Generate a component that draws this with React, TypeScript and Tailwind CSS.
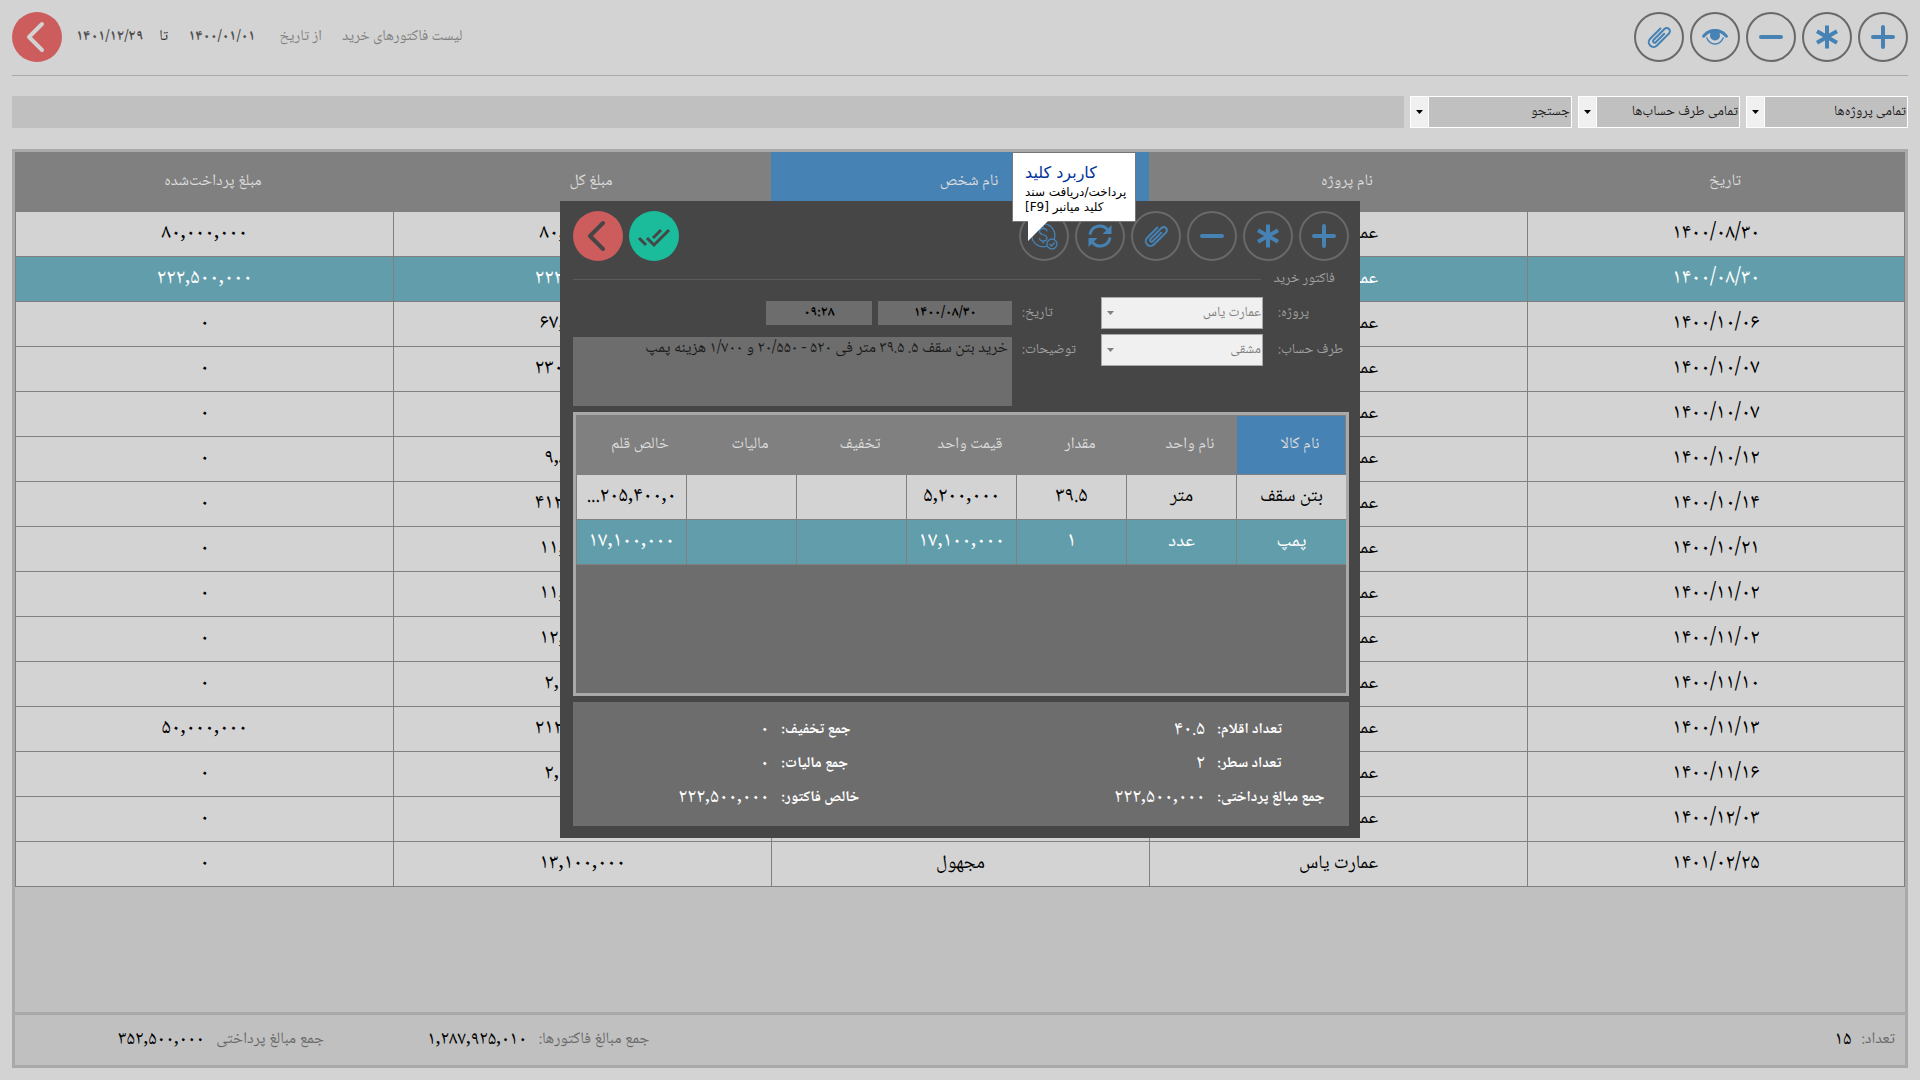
import React from "react";

// --- Types ---
interface Invoice {
  date: string;
  project: string;
  person: string;
  total: string;
  paid: string;
}

// --- Data ---
const invoices: Invoice[] = [
  { date: "۱۴۰۰/۰۸/۳۰", project: "عمارت یاس", person: "مشقی", total: "۸۰,۰۰۰,۰۰۰", paid: "۸۰,۰۰۰,۰۰۰" },
  { date: "۱۴۰۰/۰۸/۳۰", project: "عمارت یاس", person: "مشقی", total: "۲۲۲,۵۰۰,۰۰۰", paid: "۲۲۲,۵۰۰,۰۰۰" },
  { date: "۱۴۰۰/۱۰/۰۶", project: "عمارت یاس", person: "مجهول", total: "۶۷,۵۰۰,۰۰۰", paid: "۰" },
  { date: "۱۴۰۰/۱۰/۰۷", project: "عمارت یاس", person: "مشقی", total: "۲۳۰,۰۰۰,۰۰۰", paid: "۰" },
  { date: "۱۴۰۰/۱۰/۰۷", project: "عمارت یاس", person: "مجهول", total: "۰", paid: "۰" },
  { date: "۱۴۰۰/۱۰/۱۲", project: "عمارت یاس", person: "مجهول", total: "۹,۸۰۰,۰۰۰", paid: "۰" },
  { date: "۱۴۰۰/۱۰/۱۴", project: "عمارت یاس", person: "مشقی", total: "۴۱۲,۰۰۰,۰۰۰", paid: "۰" },
  { date: "۱۴۰۰/۱۰/۲۱", project: "عمارت یاس", person: "مجهول", total: "۱۱,۰۰۰,۰۰۰", paid: "۰" },
  { date: "۱۴۰۰/۱۱/۰۲", project: "عمارت یاس", person: "مجهول", total: "۱۱,۰۰۰,۰۰۰", paid: "۰" },
  { date: "۱۴۰۰/۱۱/۰۲", project: "عمارت یاس", person: "مجهول", total: "۱۲,۰۰۰,۰۰۰", paid: "۰" },
  { date: "۱۴۰۰/۱۱/۱۰", project: "عمارت یاس", person: "مجهول", total: "۲,۰۰۰,۰۰۰", paid: "۰" },
  { date: "۱۴۰۰/۱۱/۱۳", project: "عمارت یاس", person: "مشقی", total: "۲۱۲,۰۰۰,۰۰۰", paid: "۵۰,۰۰۰,۰۰۰" },
  { date: "۱۴۰۰/۱۱/۱۶", project: "عمارت یاس", person: "مجهول", total: "۲,۰۰۰,۰۰۰", paid: "۰" },
  { date: "۱۴۰۰/۱۲/۰۳", project: "عمارت یاس", person: "مجهول", total: "۰", paid: "۰" },
  { date: "۱۴۰۱/۰۲/۲۵", project: "عمارت یاس", person: "مجهول", total: "۱۳,۱۰۰,۰۰۰", paid: "۰" },
];

const columns = ["تاریخ", "نام پروژه", "نام شخص", "مبلغ کل", "مبلغ پرداخت‌شده"];

const itemColumns = ["نام کالا", "نام واحد", "مقدار", "قیمت واحد", "تخفیف", "مالیات", "خالص قلم"];

const items = [
  ["بتن سقف", "متر", "۳۹.۵", "۵,۲۰۰,۰۰۰", "", "", "۲۰۵,۴۰۰,۰..."],
  ["پمپ", "عدد", "۱", "۱۷,۱۰۰,۰۰۰", "", "", "۱۷,۱۰۰,۰۰۰"],
];

const filters = ["تمامی پروژه‌ها", "تمامی طرف حساب‌ها", "جستجو"];

// --- Icons ---
const PlusIcon = () => (
  <svg width="24" height="24" viewBox="0 0 24 24" stroke="currentColor" strokeWidth="4" strokeLinecap="round">
    <path d="M12 2v20M2 12h20" />
  </svg>
);

const MinusIcon = () => (
  <svg width="24" height="24" viewBox="0 0 24 24" stroke="currentColor" strokeWidth="4" strokeLinecap="round">
    <path d="M2 12h20" />
  </svg>
);

const AsteriskIcon = () => (
  <svg width="24" height="24" viewBox="0 0 24 24" stroke="currentColor" strokeWidth="4">
    <path d="M12 0.500v23M2 6.300l20 11.400M22 6.300L2 17.700" />
  </svg>
);

const EyeIcon = () => (
  <svg width="26" height="18" viewBox="0 0 26 18" fill="none">
    <path
      d="M0 8C4 2.500 8.500 1 13 1s9 1.500 13 7c0 2-2 2-3 1-1.500-2-3-3-4.500-3.800h-11C6 6 4.500 7 3 9 2 10 0 10 0 8z"
      fill="currentColor"
    />
    <circle cx="13" cy="7.500" r="5" fill="currentColor" />
    <path d="M4.500 9.500c2 4.500 5 6.500 8.500 6.500s6.500-2 8.500-6.500" stroke="currentColor" strokeWidth="1.400" />
  </svg>
);

const ClipIcon = () => (
  <svg width="26" height="26" viewBox="0 0 26 26" fill="none" stroke="currentColor" strokeWidth="2" strokeLinecap="round">
    <path
      transform="rotate(45 13 13)"
      d="M8 6v14.500a4.800 4.800 0 0 0 9.600 0V3.500a3.200 3.200 0 0 0-6.400 0v15.500a1.600 1.600 0 0 0 3.200 0V7"
    />
  </svg>
);

const RefreshIcon = () => (
  <svg width="26" height="26" viewBox="0 0 26 26" fill="none" stroke="currentColor" strokeWidth="3">
    <path d="M3 11.500A10 10 0 0 1 20.500 6.500M23 14.500A10 10 0 0 1 5.500 19.500" />
    <path d="M24.500 2v9h-9zM1.500 24v-9h9z" fill="currentColor" stroke="none" />
  </svg>
);

const CoinIcon = () => (
  <svg width="28" height="28" viewBox="0 0 28 28" fill="none" stroke="currentColor" strokeWidth="1.300">
    <path d="M24 17.500A11.500 11.500 0 1 0 17.500 24" />
    <path d="M17 9.500c0-1.800-1.500-3-3.800-3S9.500 7.700 9.500 9.500c0 4.200 7.500 2.300 7.500 6.500 0 1.800-1.500 3-3.800 3s-3.700-1.200-3.700-3M13.200 4v2.500M13.200 19v2.500" />
    <circle cx="22" cy="22" r="5" />
    <path d="M19.500 22l2 2 3.300-3.500" />
  </svg>
);

const BackIcon = () => (
  <svg width="50" height="50" viewBox="0 0 50 50" fill="none" stroke="currentColor" strokeWidth="4" strokeLinecap="round" strokeLinejoin="round">
    <path d="M30 12L17 25l13 13" />
  </svg>
);

const DoubleCheckIcon = () => (
  <svg width="50" height="50" viewBox="0 0 50 50" fill="none" stroke="currentColor" strokeWidth="3">
    <path d="M10 27l7 7M18 27l7 7L40 19M24 27l8-8" />
  </svg>
);

// --- Shared pieces ---
interface RoundButtonProps {
  label: string;
  children: React.ReactNode;
}

const RoundButton = ({ label, children }: RoundButtonProps) => (
  <button
    type="button"
    aria-label={label}
    className="flex size-[50px] items-center justify-center rounded-full border-2 border-[#696969] text-[#4682b4]"
  >
    {children}
  </button>
);

const Arrow = () => (
  <svg width="7" height="4" viewBox="0 0 7 4" fill="currentColor">
    <path d="M0 0h7L3.500 4z" />
  </svg>
);

interface FilterSelectProps {
  label: string;
}

const FilterSelect = ({ label }: FilterSelectProps) => (
  <div className="relative h-8 w-[162px] border border-white bg-[#c0c0c0]">
    <select aria-label={label} className="h-full w-full appearance-none truncate bg-transparent pr-px pl-5 text-[14px] leading-[30px] text-[#202020]">
      <option>{label}</option>
    </select>
    <span className="pointer-events-none absolute inset-y-0 left-0 flex w-[18px] items-center justify-center border-r border-white bg-[#f0f0f0] text-black">
      <Arrow />
    </span>
  </div>
);

interface FormSelectProps {
  id: string;
  value: string;
}

const FormSelect = ({ id, value }: FormSelectProps) => (
  <div className="relative h-8 w-[162px] border border-[#a9a9a9] bg-[#f0f0f0]">
    <select id={id} className="h-full w-full appearance-none truncate bg-transparent pr-px pl-5 text-[14px] leading-[30px] text-[#808080]">
      <option>{value}</option>
    </select>
    <span className="pointer-events-none absolute inset-y-0 left-0 flex w-[16px] items-center justify-center text-[#808080]">
      <Arrow />
    </span>
  </div>
);

interface TotalProps {
  label: string;
  value: string;
}

const Total = ({ label, value }: TotalProps) => (
  <div className="flex h-[34px] items-center gap-3 text-white">
    <span className="w-[132px] text-left text-[15px] font-bold">{label}</span>
    <span className="text-[20px]">{value}</span>
  </div>
);

const Tooltip = () => (
  <div
    role="tooltip"
    className="absolute top-[-59px] left-[-7px] z-10 h-[70px] w-[124px] border border-[#767676] bg-white pt-2 pl-3 text-left font-['DejaVu_Sans',sans-serif] whitespace-nowrap"
  >
    <p className="text-[16px] leading-[24px] text-[#003399]">کاربرد کلید</p>
    <p className="text-[12px] leading-[15px] text-black">پرداخت/دریافت سند</p>
    <p className="text-[12px] leading-[15px] text-black">کلید میانبر [F9]</p>
    <svg className="absolute top-[67px] left-[15px]" width="21" height="22" viewBox="0 0 21 22">
      <path d="M0 0h21L0 21z" fill="#ffffff" />
    </svg>
  </div>
);

// --- Invoice dialog ---
const InvoiceDialog = () => (
  <div className="fixed inset-0 flex items-start justify-center pt-[201px]">
    <section role="dialog" aria-label="فاکتور خرید" className="w-[800px] bg-[#464646] pt-[10px] pr-[11px] pb-3 pl-[13px]">
      <div className="flex justify-between">
        <div className="flex gap-[6px]">
          <RoundButton label="افزودن"><PlusIcon /></RoundButton>
          <RoundButton label="ویرایش"><AsteriskIcon /></RoundButton>
          <RoundButton label="حذف"><MinusIcon /></RoundButton>
          <RoundButton label="پیوست"><ClipIcon /></RoundButton>
          <RoundButton label="بازخوانی"><RefreshIcon /></RoundButton>
          <div className="relative">
            <RoundButton label="پرداخت/دریافت سند"><CoinIcon /></RoundButton>
            <Tooltip />
          </div>
        </div>
        <div className="flex gap-[6px]">
          <button type="button" aria-label="تایید" className="size-[50px] rounded-full bg-[#1abc9c] text-[#464646]">
            <DoubleCheckIcon />
          </button>
          <button type="button" aria-label="بازگشت" className="size-[50px] rounded-full bg-[#cd5c5c] text-[#464646]">
            <BackIcon />
          </button>
        </div>
      </div>

      <div className="flex h-9 items-center gap-3 pr-[14px]">
        <h2 className="w-[62px] text-[14px] leading-6 whitespace-nowrap text-[#a0a0a0]">فاکتور خرید</h2>
        <div className="h-px flex-1 bg-[#5a5a5a]" />
      </div>

      <form className="flex flex-col gap-[5px] text-[14px] whitespace-nowrap text-[#a0a0a0]">
        <div className="flex items-center">
          <label htmlFor="project" className="w-[86px] pl-[15px] text-left">پروژه:</label>
          <FormSelect id="project" value="عمارت یاس" />
          <label htmlFor="date" className="w-[89px] pl-[10px] text-left">تاریخ:</label>
          <div className="flex flex-1 gap-[6px]">
            <input id="date" defaultValue="۱۴۰۰/۰۸/۳۰" className="h-6 w-[134px] bg-[#6d6d6d] text-center font-bold text-black" />
            <input aria-label="ساعت" defaultValue="۰۹:۲۸" className="h-6 w-[106px] bg-[#6d6d6d] text-center font-bold text-black" />
          </div>
        </div>
        <div className="flex items-start">
          <label htmlFor="account" className="w-[86px] pl-[15px] text-left leading-8">طرف حساب:</label>
          <FormSelect id="account" value="مشقی" />
          <label htmlFor="notes" className="w-[89px] pl-[10px] text-left leading-8">توضیحات:</label>
          <textarea
            id="notes"
            className="mt-[3px] h-[69px] flex-1 resize-none bg-[#6d6d6d] px-1 text-[16px] leading-6 text-[#1a1a1a]"
            defaultValue="خرید بتن سقف ۵. ۳۹.۵ متر فی ۵۲۰ - ۲۰/۵۵۰ و ۱/۷۰۰ هزینه پمپ"
          />
        </div>
      </form>

      <div className="mt-[6px] h-[284px] border-3 border-[#a9a9a9] bg-[#6d6d6d]">
        <table className="w-full table-fixed border-separate border-spacing-0">
          <thead>
            <tr className="bg-[#808080] text-[16px] text-[#dcdcdc]">
              {itemColumns.map((col, i) => (
                <th key={col} className={i === 0 ? "h-[60px] border border-[#808080] bg-[#4682b4] pl-[18px] font-normal" : "h-[60px] pl-[18px] font-normal"}>
                  {col}
                </th>
              ))}
            </tr>
          </thead>
          <tbody>
            {items.map((row, r) => (
              <tr key={r} className={r === 1 ? "bg-[#629dab] text-white" : "bg-[#d3d3d3] text-black"}>
                {row.map((cell, i) => (
                  <td
                    key={i}
                    className={
                      i < 2
                        ? "h-[45px] border-b border-l border-[#808080] text-center text-[19px] leading-7 whitespace-nowrap"
                        : "h-[45px] border-b border-l border-[#808080] text-center text-[21px] leading-7 whitespace-nowrap"
                    }
                  >
                    {cell}
                  </td>
                ))}
              </tr>
            ))}
          </tbody>
        </table>
      </div>

      <div className="mt-[6px] flex h-[124px] flex-col justify-center bg-[#6d6d6d]">
        <div className="flex">
          <div className="w-[436px]">
            <Total label="تعداد اقلام:" value="۴۰.۵" />
            <Total label="تعداد سطر:" value="۲" />
            <Total label="جمع مبالغ پرداختی:" value="۲۲۲,۵۰۰,۰۰۰" />
          </div>
          <div className="flex-1">
            <Total label="جمع تخفیف:" value="۰" />
            <Total label="جمع مالیات:" value="۰" />
            <Total label="خالص فاکتور:" value="۲۲۲,۵۰۰,۰۰۰" />
          </div>
        </div>
      </div>
    </section>
  </div>
);

export default function App() {
  return (
    <div
      dir="rtl"
      className="flex min-h-screen flex-col bg-[#d3d3d3] p-3 font-['Noto_Naskh_Arabic','DejaVu_Sans',sans-serif]"
    >
      {/* ═══ Toolbar ═══ */}
      <header className="flex h-16 items-start justify-between border-b border-[#a9a9a9]">
        <div className="flex gap-[6px]">
          <RoundButton label="افزودن"><PlusIcon /></RoundButton>
          <RoundButton label="ویرایش"><AsteriskIcon /></RoundButton>
          <RoundButton label="حذف"><MinusIcon /></RoundButton>
          <RoundButton label="نمایش"><EyeIcon /></RoundButton>
          <RoundButton label="پیوست"><ClipIcon /></RoundButton>
        </div>
        <div className="flex h-[50px] items-center text-[15px] text-[#808080]">
          <h1 className="ml-5">لیست فاکتورهای خرید</h1>
          <span className="ml-6">از تاریخ</span>
          <span className="ml-5 font-bold text-[#505050]">۱۴۰۰/۰۱/۰۱</span>
          <span className="ml-4 text-[#303030]">تا</span>
          <span className="ml-[14px] font-bold text-[#505050]">۱۴۰۱/۱۲/۲۹</span>
          <button type="button" aria-label="بازگشت" className="size-[50px] rounded-full bg-[#cd5c5c] text-[#d3d3d3]">
            <BackIcon />
          </button>
        </div>
      </header>

      {/* ═══ Filters ═══ */}
      <div className="mt-5 flex gap-[6px]">
        {filters.map((f) => (
          <FilterSelect key={f} label={f} />
        ))}
        <input aria-label="متن جستجو" className="h-8 flex-1 bg-[#c0c0c0] px-2 text-[16px]" />
      </div>

      {/* ═══ Invoice list ═══ */}
      <main className="mt-[21px] flex flex-1 flex-col border-3 border-[#a9a9a9] bg-[#c0c0c0]">
        <div className="flex-1">
          <table className="w-full table-fixed border-separate border-spacing-0">
            <thead>
              <tr className="bg-[#808080] text-[16px] text-[#dcdcdc]">
                {columns.map((col, i) => (
                  <th key={col} className={i === 2 ? "h-[60px] bg-[#4682b4] pl-[18px] font-normal" : "h-[60px] pl-[18px] font-normal"}>
                    {col}
                  </th>
                ))}
              </tr>
            </thead>
            <tbody>
              {invoices.map((inv, i) => (
                <tr key={i} className={i === 1 ? "bg-[#629dab] text-white" : "bg-[#d3d3d3] text-black"}>
                  {[inv.date, inv.project, inv.person, inv.total, inv.paid].map((cell, c) => (
                    <td
                      key={c}
                      className={
                        c === 1 || c === 2
                          ? "h-[45px] border-b border-l border-[#808080] text-center text-[19px] leading-7"
                          : "h-[45px] border-b border-l border-[#808080] text-center text-[21px] leading-7 first:border-r"
                      }
                    >
                      {cell}
                    </td>
                  ))}
                </tr>
              ))}
            </tbody>
          </table>
        </div>

        <footer className="flex h-[53px] items-center border-t-3 border-[#a9a9a9] pr-[10px] pl-[103px] text-[19px] text-black">
          <span className="ml-[10px] text-[16px] text-[#696969]">تعداد:</span>
          <span>۱۵</span>
          <div className="flex-1" />
          <span className="ml-3 text-[16px] text-[#696969]">جمع مبالغ فاکتورها:</span>
          <span className="ml-[103px]">۱,۲۸۷,۹۲۵,۰۱۰</span>
          <span className="ml-3 text-[16px] text-[#696969]">جمع مبالغ پرداختی</span>
          <span>۳۵۲,۵۰۰,۰۰۰</span>
        </footer>
      </main>

      <InvoiceDialog />
    </div>
  );
}
